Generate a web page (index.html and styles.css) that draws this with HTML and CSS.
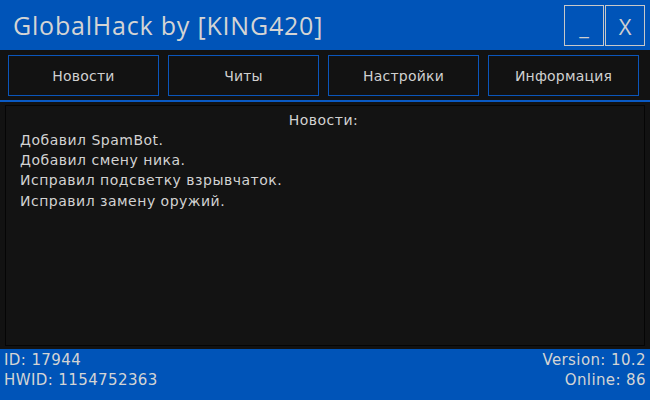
FILE: index.html
```html
<!DOCTYPE html>
<html>
<head>
<meta charset="utf-8">
<link rel="stylesheet" href="styles.css">
</head>
<body>
<div class="app">
  <header class="titlebar">
    <div class="title">GlobalHack by [KING420]</div>
    <div class="winbtns">
      <div class="winbtn">_</div>
      <div class="winbtn">X</div>
    </div>
  </header>
  <nav class="tabs">
    <div class="tab">Новости</div>
    <div class="tab">Читы</div>
    <div class="tab">Настройки</div>
    <div class="tab">Информация</div>
  </nav>
  <div class="sep"></div>
  <main class="panel">
    <div class="panel-title">Новости:</div>
    <div class="line">Добавил SpamBot.</div>
    <div class="line">Добавил смену ника.</div>
    <div class="line">Исправил подсветку взрывчаток.</div>
    <div class="line">Исправил замену оружий.</div>
  </main>
  <footer class="status">
    <div class="col">
      <div>ID: 17944</div>
      <div>HWID: 1154752363</div>
    </div>
    <div class="col right">
      <div>Version: 10.2</div>
      <div>Online: 86</div>
    </div>
  </footer>
</div>
</body>
</html>
```
FILE: styles.css
```css
* { box-sizing: border-box; }
html, body { margin: 0; padding: 0; }
body {
  width: 650px;
  height: 400px;
  overflow: hidden;
  background: #121212;
  font-family: "DejaVu Sans", "Liberation Sans", sans-serif;
  color: #d2d2d2;
}
.app {
  display: flex;
  flex-direction: column;
  height: 400px;
}
.titlebar {
  height: 50px;
  background: #0054b8;
  display: flex;
  align-items: flex-start;
  justify-content: space-between;
  padding: 5px 5px 0 13px;
}
.title {
  font-family: "Open Sans", "DejaVu Sans", sans-serif;
  font-size: 25px;
  letter-spacing: 0.8px;
  line-height: 40px;
  color: #d4d4d4;
}
.winbtns {
  display: flex;
  gap: 1px;
}
.winbtn {
  width: 40px;
  height: 41px;
  border: 1px solid #c8c8c8;
  display: flex;
  align-items: center;
  justify-content: center;
  font-family: "Open Sans", "DejaVu Sans", sans-serif;
  font-size: 22px;
  color: #cfcfcf;
}
.tabs {
  display: flex;
  gap: 9px;
  padding: 5px 11px 0 8px;
  height: 50px;
}
.tab {
  flex: 1;
  height: 41px;
  border: 1px solid #0b56bb;
  display: flex;
  align-items: center;
  justify-content: center;
  font-size: 14px;
  letter-spacing: 0.2px;
  color: #d0d0d0;
}
.sep {
  height: 2px;
  background: #0a5ac4;
}
.panel {
  flex: 1;
  margin: 3px 5px 3px 5px;
  border: 1px solid #050505;
  background: #131313;
  padding: 4px 14px;
  font-size: 14px;
  letter-spacing: 0.5px;
}
.panel-title {
  text-align: center;
  line-height: 20px;
  padding-right: 3px;
}
.line {
  line-height: 20.2px;
}
.status {
  height: 51px;
  background: #0054b8;
  display: flex;
  justify-content: space-between;
  padding: 0 4px 0 4px;
  font-size: 15px;
  letter-spacing: 0.4px;
  color: #d4d4d4;
}
.col div { line-height: 20px; }
.col div:first-child { margin-top: 1px; }
.right { text-align: right; }
```
